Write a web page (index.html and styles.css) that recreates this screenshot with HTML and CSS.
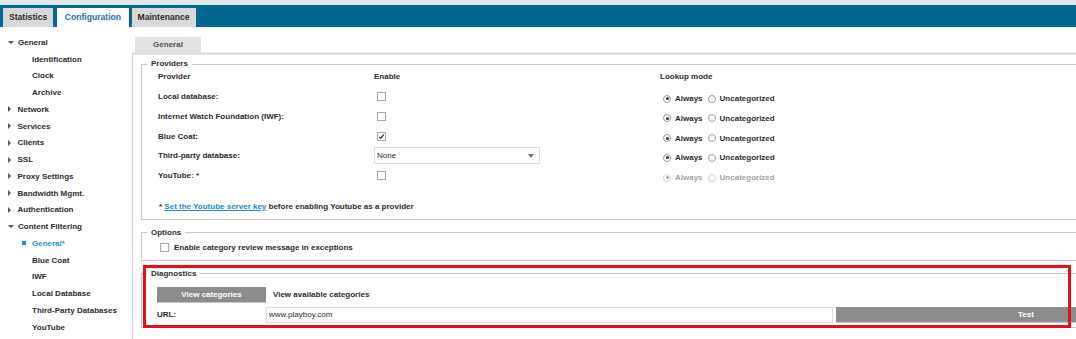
FILE: index.html
```html
<!DOCTYPE html>
<html lang="en">
<head>
    <meta charset="UTF-8">
    <meta name="viewport" content="width=device-width, initial-scale=1.0">
    <title>Configuration - Content Filtering</title>
    <link rel="stylesheet" href="styles.css">
</head>
<body>
    <div class="topbar">
        <div class="tab">Statistics</div>
        <div class="tab active">Configuration</div>
        <div class="tab">Maintenance</div>
    </div>
    <div class="layout">
        <ul class="sidebar">
            <li><span class="arrow down"></span>General</li>
            <li class="sub">Identification</li>
            <li class="sub">Clock</li>
            <li class="sub">Archive</li>
            <li><span class="arrow right"></span>Network</li>
            <li><span class="arrow right"></span>Services</li>
            <li><span class="arrow right"></span>Clients</li>
            <li><span class="arrow right"></span>SSL</li>
            <li><span class="arrow right"></span>Proxy Settings</li>
            <li><span class="arrow right"></span>Bandwidth Mgmt.</li>
            <li><span class="arrow right"></span>Authentication</li>
            <li><span class="arrow down"></span>Content Filtering</li>
            <li class="current"><span class="bullet"></span>General*</li>
            <li class="sub">Blue Coat</li>
            <li class="sub">IWF</li>
            <li class="sub">Local Database</li>
            <li class="sub">Third-Party Databases</li>
            <li class="sub">YouTube</li>
        </ul>
        <div class="main">
            <div class="subtab">General</div>
            <div class="panel">
                <fieldset>
                    <legend>Providers</legend>
                    <div class="provider-grid">
                        <div class="head">Provider</div>
                        <div class="head">Enable</div>
                        <div class="head">Lookup mode</div>

                        <div>Local database:</div>
                        <div><span class="check"></span></div>
                        <div class="lookup"><span class="radio on"></span>Always<span class="radio"></span>Uncategorized</div>

                        <div>Internet Watch Foundation (IWF):</div>
                        <div><span class="check"></span></div>
                        <div class="lookup"><span class="radio on"></span>Always<span class="radio"></span>Uncategorized</div>

                        <div>Blue Coat:</div>
                        <div><span class="check"><svg width="7" height="7" viewBox="0 0 7 7"><path d="M1.2 3.9 L2.8 5.4 L5.8 1.4" fill="none" stroke="#333" stroke-width="1.2"/></svg></span></div>
                        <div class="lookup"><span class="radio on"></span>Always<span class="radio"></span>Uncategorized</div>

                        <div>Third-party database:</div>
                        <div><div class="select">None<span class="caret"></span></div></div>
                        <div class="lookup"><span class="radio on"></span>Always<span class="radio"></span>Uncategorized</div>

                        <div>YouTube: *</div>
                        <div><span class="check"></span></div>
                        <div class="lookup disabled"><span class="radio on"></span>Always<span class="radio"></span>Uncategorized</div>
                    </div>
                    <p class="note">* <a href="#">Set the Youtube server key</a> before enabling Youtube as a provider</p>
                </fieldset>

                <fieldset>
                    <legend>Options</legend>
                    <div class="option-row"><span class="check"></span>Enable category review message in exceptions</div>
                </fieldset>

                <fieldset class="diagnostics">
                    <legend>Diagnostics</legend>
                    <div class="diag-actions">
                        <div class="btn btn-view">View categories</div>
                        <span>View available categories</span>
                    </div>
                    <div class="url-row">
                        <label>URL:</label>
                        <div class="url-input">www.playboy.com</div>
                        <div class="btn btn-test">Test</div>
                    </div>
                </fieldset>

                <div class="highlight"></div>
            </div>
        </div>
    </div>
</body>
</html>
```

FILE: styles.css
```css
html, body {
    margin: 0;
    overflow: hidden;
}
body {
    font-family: "Liberation Sans", Arial, sans-serif;
    font-size: 8px;
    font-weight: bold;
    color: #2b2b2b;
    background-color: #fff;
}
.topbar {
    display: flex;
    align-items: flex-end;
    height: 22px;
    border-top: 5px solid #dfe6ea;
    background-color: #02688f;
    padding-left: 3px;
}
.tab {
    height: 19px;
    line-height: 19px;
    padding: 0 6px;
    margin-right: 4px;
    background-color: #d8d8d8;
    font-size: 8.6px;
}
.tab.active {
    padding: 0 7.5px;
    margin-right: 3px;
    background-color: #fff;
    color: #1f6fa3;
}
.layout {
    display: flex;
    width: 1240px;
}
.sidebar {
    list-style: none;
    margin: 0;
    padding: 7px 0 0;
    width: 132px;
    flex-shrink: 0;
}
.sidebar li {
    display: flex;
    align-items: center;
    height: 16.75px;
    padding-left: 8px;
    white-space: nowrap;
}
.sidebar li.sub {
    padding-left: 32px;
}
.sidebar li.current {
    padding-left: 22px;
    color: #1e8fd6;
}
.arrow {
    width: 0;
    height: 0;
}
.arrow.down {
    border-left: 3px solid transparent;
    border-right: 3px solid transparent;
    border-top: 3.5px solid #555;
    margin-right: 4px;
}
.arrow.right {
    border-top: 3px solid transparent;
    border-bottom: 3px solid transparent;
    border-left: 3.5px solid #555;
    margin-right: 6.5px;
}
.bullet {
    width: 4px;
    height: 4px;
    background-color: #1e8fd6;
    margin-right: 6px;
}
.main {
    flex: 1;
    padding-top: 10px;
}
.subtab {
    width: 66px;
    height: 15px;
    line-height: 15px;
    margin-left: 3px;
    text-align: center;
    background-color: #e2e2e2;
    color: #555;
}
.panel {
    position: relative;
    height: 280px;
    border-top: 3px solid #e2e2e2;
    border-left: 1px solid #d0d0d0;
    padding: 4px 0 0 8px;
}
fieldset {
    margin: 0 0 8px;
    padding: 0 0 6px 5px;
    border: 1px solid #c8c8c8;
    min-width: 0;
}
legend {
    padding: 0 4px;
    line-height: 10px;
}
.provider-grid {
    display: grid;
    grid-template-columns: 216px 286px auto;
    grid-template-rows: 17.7px repeat(5, 19.8px);
    align-items: center;
    margin-left: 11px;
}
.provider-grid .head {
    align-self: start;
    line-height: 16px;
}
.check {
    display: inline-flex;
    align-items: center;
    justify-content: center;
    box-sizing: border-box;
    width: 9px;
    height: 9px;
    border: 1px solid #a8a8a8;
    background-color: #fff;
    vertical-align: middle;
}
.provider-grid .check {
    margin-left: 3px;
}
.select {
    display: flex;
    align-items: center;
    justify-content: space-between;
    box-sizing: border-box;
    width: 166px;
    height: 17px;
    padding: 0 5px 0 2px;
    border: 1px solid #ddd;
    font-weight: normal;
}
.caret {
    width: 0;
    height: 0;
    border-left: 3.5px solid transparent;
    border-right: 3.5px solid transparent;
    border-top: 4px solid #6c7680;
}
.lookup {
    display: flex;
    align-items: center;
    margin-top: 4px;
    padding-left: 3px;
}
.lookup.disabled {
    opacity: 0.45;
}
.radio {
    position: relative;
    box-sizing: border-box;
    width: 8px;
    height: 8px;
    border: 1px solid #999;
    border-radius: 50%;
    background-color: #fff;
    margin-right: 4px;
}
.lookup .radio:nth-of-type(2) {
    margin-left: 5.5px;
    margin-right: 3.5px;
}
.radio.on::after {
    content: "";
    position: absolute;
    left: 1.5px;
    top: 1.5px;
    width: 3px;
    height: 3px;
    border-radius: 50%;
    background-color: #333;
}
.note {
    margin: 15px 0 0 12px;
    line-height: 12px;
}
.note a {
    color: #1a8ad4;
}
.option-row {
    display: flex;
    align-items: center;
    height: 12px;
    margin: 4px 0 0 13px;
}
.option-row .check {
    margin-right: 5px;
}
.diagnostics {
    padding-bottom: 4px;
}
.diag-actions {
    display: flex;
    align-items: center;
    margin: 8px 0 0 10px;
}
.diag-actions span {
    margin-left: 7px;
}
.btn {
    box-sizing: border-box;
    height: 16px;
    line-height: 15px;
    text-align: center;
    color: #fff;
    background-color: #8c8c8c;
    border-bottom: 1px solid #c4c4c4;
}
.btn-view {
    width: 109px;
}
.url-row {
    display: flex;
    align-items: center;
    height: 16px;
    margin: 4px 0 0 10px;
}
.url-row label {
    width: 109px;
}
.url-input {
    box-sizing: border-box;
    width: 567px;
    height: 16px;
    line-height: 14px;
    padding-left: 2px;
    border: 1px solid #ddd;
    font-weight: normal;
}
.btn-test {
    width: 380px;
    margin-left: 3px;
}
.highlight {
    position: absolute;
    left: 10px;
    top: 210px;
    width: 928px;
    height: 63px;
    box-sizing: border-box;
    border: 3px solid #ea0f16;
}
```
